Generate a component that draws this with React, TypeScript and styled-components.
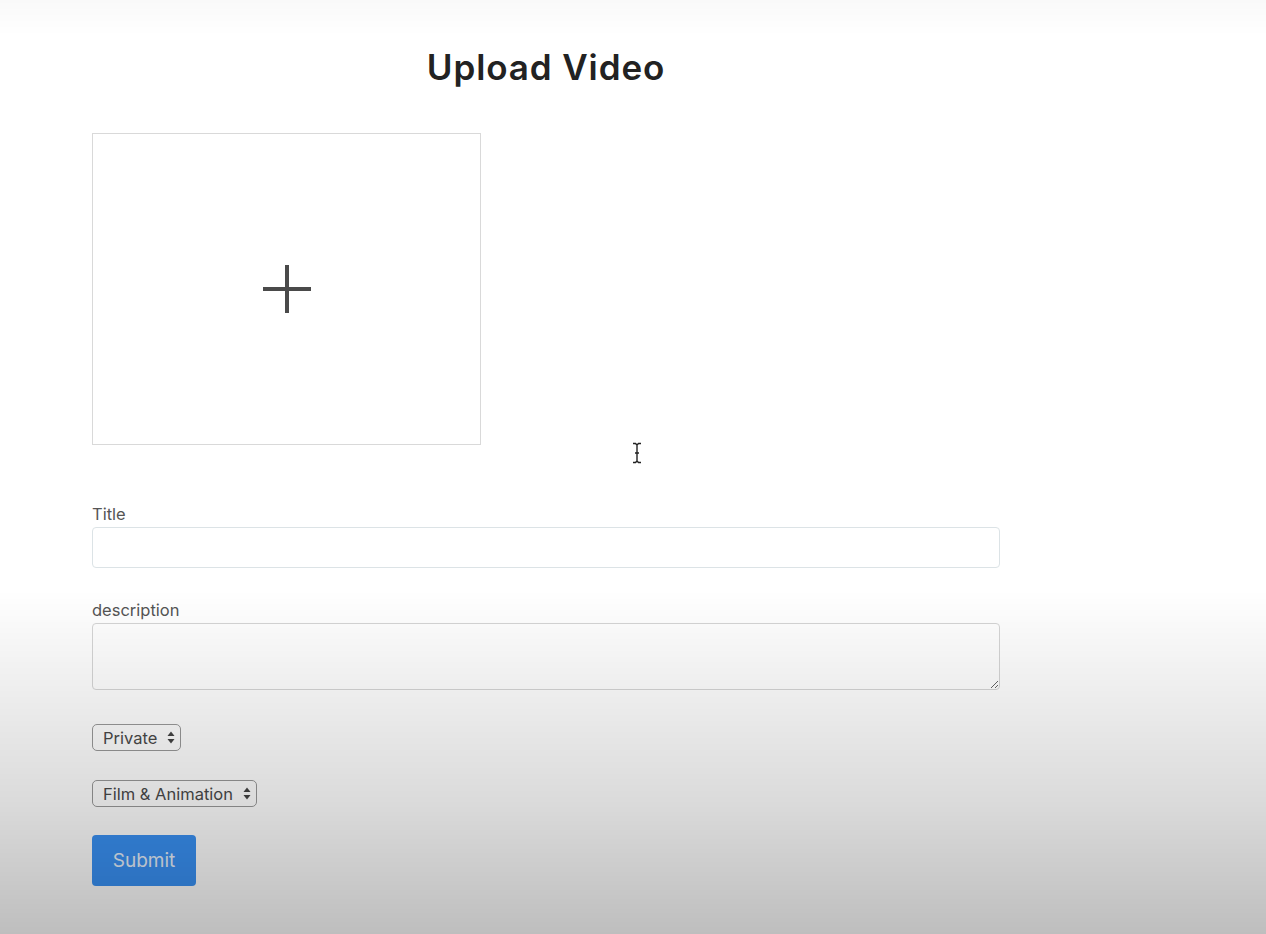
import styled, { createGlobalStyle } from 'styled-components'

const GlobalStyle = createGlobalStyle`
    html, body {
        margin: 0;
        padding: 0;
        background: #ffffff;
        font-family: Inter, "Liberation Sans", sans-serif;
        color: #333;
    }
`

// the screenshot is a video frame: a soft vignette darkens the lower part
const Vignette = styled.div`
    position: fixed;
    inset: 0;
    pointer-events: none;
    background: linear-gradient(
        to bottom,
        rgba(0, 0, 0, 0.025) 0px,
        rgba(0, 0, 0, 0) 36px,
        rgba(0, 0, 0, 0) 590px,
        rgba(0, 0, 0, 0.075) 700px,
        rgba(0, 0, 0, 0.14) 800px,
        rgba(0, 0, 0, 0.255) 934px
    );
`

const Page = styled.main`
    position: relative;
    min-height: 934px;
    box-sizing: border-box;
    padding: 47px 0 0 92px;
`

const Form = styled.form`
    display: flex;
    flex-direction: column;
    align-items: flex-start;
    width: 908px;
`

const Heading = styled.h2`
    align-self: stretch;
    margin: 0 0 46px;
    text-align: center;
    font-size: 35px;
    line-height: 40px;
    font-weight: 600;
    letter-spacing: 0.9px;
    color: #222;
`

const DropZone = styled.div`
    display: flex;
    align-items: center;
    justify-content: center;
    width: 389px;
    height: 312px;
    box-sizing: border-box;
    border: 1px solid #d9d9d9;
    background: #fff;
    cursor: pointer;
`

const Field = styled.div<{ $top: number }>`
    display: flex;
    flex-direction: column;
    align-self: stretch;
    margin-top: ${props => props.$top}px;
`

const Label = styled.label`
    font-size: 16.5px;
    line-height: 20px;
    color: #555;
    margin-bottom: 3px;
`

const Input = styled.input`
    height: 41px;
    box-sizing: border-box;
    border: 1px solid #dce3e6;
    border-radius: 4px;
    background: #fff;
    padding: 0 10px;
    font: inherit;
    outline: none;
`

const TextArea = styled.textarea`
    height: 67px;
    box-sizing: border-box;
    border: 1px solid #d6d6d6;
    border-radius: 4px;
    background: #fff;
    padding: 6px 10px;
    font: inherit;
    outline: none;
`

const SelectWrap = styled.div<{ $top: number }>`
    position: relative;
    display: inline-flex;
    margin-top: ${props => props.$top}px;
`

const Select = styled.select`
    appearance: none;
    height: 27px;
    box-sizing: border-box;
    padding: 0 22px 0 10px;
    border: 1px solid #9a9a9a;
    border-radius: 5px;
    background: #fff;
    font-family: Inter, "Liberation Sans", sans-serif;
    font-size: 16.5px;
    color: #4a4a4a;
    outline: none;
`

const Arrows = styled.svg`
    position: absolute;
    right: 6px;
    top: 7px;
    pointer-events: none;
`

const SubmitButton = styled.button`
    margin-top: 28px;
    width: 104px;
    height: 51px;
    border: none;
    border-radius: 4px;
    background: #3a92f5;
    color: #e8f1fc;
    font-family: Inter, "Liberation Sans", sans-serif;
    font-size: 19px;
    cursor: pointer;
`

const Cursor = styled.svg`
    position: absolute;
    left: 631px;
    top: 442px;
`

const privacyOptions = [
    { value: 0, label: 'Private' },
    { value: 1, label: 'Public' },
]

const categoryOptions = [
    { value: 0, label: 'Film & Animation' },
    { value: 1, label: 'Autos & Vehicles' },
    { value: 2, label: 'Music' },
    { value: 3, label: 'Pets & Animals' },
]

const UpDown = () => (
    <Arrows width="8" height="13" viewBox="0 0 8 13">
        <path d="M4 0.5 L7.5 5 H0.5 Z" fill="#444" />
        <path d="M4 12.5 L7.5 8 H0.5 Z" fill="#444" />
    </Arrows>
)

const App = () => {
    return (
        <>
            <GlobalStyle />
            <Page>
                <Form onSubmit={e => e.preventDefault()}>
                    <Heading>Upload Video</Heading>
                    <DropZone>
                        <svg width="50" height="50" viewBox="0 0 50 50">
                            <path d="M25 1 V49 M1 25 H49" stroke="#4a4a4a" strokeWidth="4" />
                        </svg>
                    </DropZone>
                    <Field $top={59}>
                        <Label>Title</Label>
                        <Input />
                    </Field>
                    <Field $top={32}>
                        <Label>description</Label>
                        <TextArea />
                    </Field>
                    <SelectWrap $top={34}>
                        <Select>
                            {privacyOptions.map(item => (
                                <option key={item.value} value={item.value}>{item.label}</option>
                            ))}
                        </Select>
                        <UpDown />
                    </SelectWrap>
                    <SelectWrap $top={29}>
                        <Select>
                            {categoryOptions.map(item => (
                                <option key={item.value} value={item.value}>{item.label}</option>
                            ))}
                        </Select>
                        <UpDown />
                    </SelectWrap>
                    <SubmitButton type="submit">Submit</SubmitButton>
                </Form>
                <Cursor width="12" height="22" viewBox="0 0 12 22">
                    <path d="M2 1.5 H4.5 L6 3 L7.5 1.5 H10 M6 3 V19 M2 20.5 H4.5 L6 19 L7.5 20.5 H10 M4 11 H8" stroke="#222" strokeWidth="1.4" fill="none" />
                </Cursor>
            </Page>
            <Vignette />
        </>
    )
}

export default App
